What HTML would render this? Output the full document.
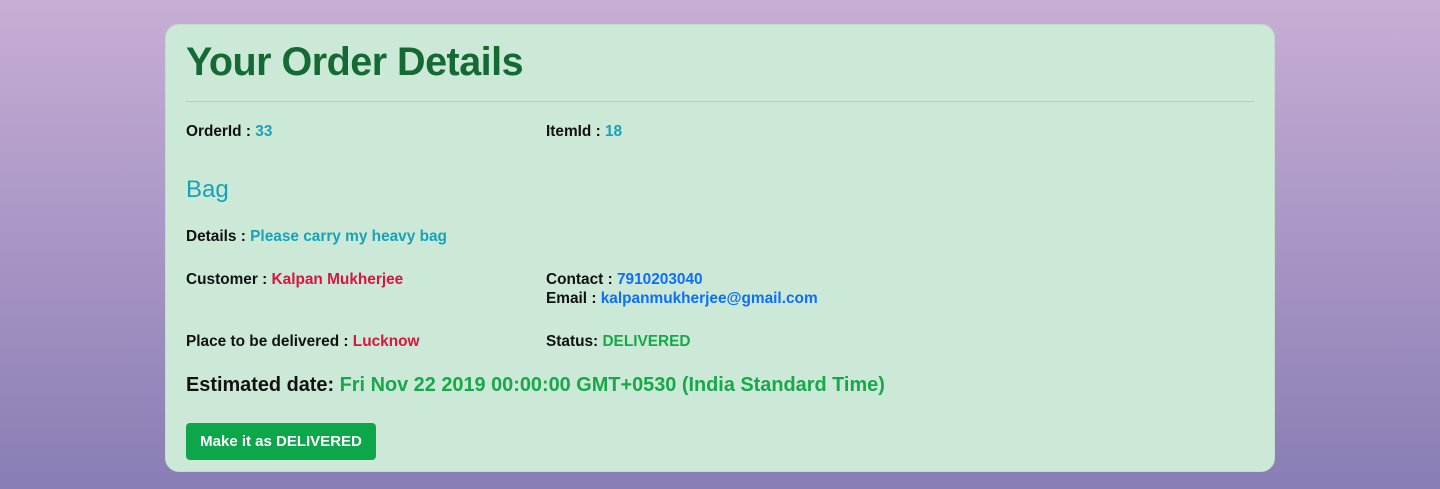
<!DOCTYPE html>
<html><head><meta charset="utf-8"><style>
*{margin:0;padding:0;box-sizing:border-box}
body{width:1440px;height:489px;overflow:hidden;background:linear-gradient(#c7aed4,#897db5);font-family:"Liberation Sans",sans-serif;position:relative}
.card{position:absolute;left:165px;top:24px;width:1110px;height:448px;background:#cce9d8;border-radius:14px;border:1px solid #c3dccc}
.t{position:absolute;white-space:nowrap;line-height:1;font-weight:bold;font-size:15.4px;color:#111}
.c{color:#17a2b8}.r{color:#dc143c}.b{color:#0d6efd}.g{color:#17a84a}
hr{position:absolute;left:186px;top:101px;width:1068px;border:0;border-top:1px solid #aed4bf}
.btn{position:absolute;left:186px;top:423px;width:190px;height:37px;background:#0ea64a;border-radius:4px;color:#fff;font-weight:bold;font-size:15px;line-height:37px;text-align:center}
</style></head><body>
<div class="card"></div>
<div class="t" style="left:186px;top:43px;font-size:39.5px;color:#136a33;letter-spacing:-0.5px">Your Order Details</div>
<hr>
<div class="t" style="left:186px;top:124px">OrderId : <span class="c">33</span></div>
<div class="t" style="left:546px;top:124px">ItemId : <span class="c">18</span></div>
<div class="t c" style="left:186px;top:178px;font-size:24px;font-weight:normal">Bag</div>
<div class="t" style="left:186px;top:229px">Details : <span class="c">Please carry my heavy bag</span></div>
<div class="t" style="left:186px;top:272px">Customer : <span class="r">Kalpan Mukherjee</span></div>
<div class="t" style="left:546px;top:272px">Contact : <span class="b">7910203040</span></div>
<div class="t" style="left:546px;top:291px">Email : <span class="b">kalpanmukherjee@gmail.com</span></div>
<div class="t" style="left:186px;top:334px">Place to be delivered : <span class="r">Lucknow</span></div>
<div class="t" style="left:546px;top:334px">Status: <span class="g">DELIVERED</span></div>
<div class="t" style="left:186px;top:376px;font-size:19.9px">Estimated date: <span class="g">Fri Nov 22 2019 00:00:00 GMT+0530 (India Standard Time)</span></div>
<div class="btn">Make it as DELIVERED</div>
</body></html>
